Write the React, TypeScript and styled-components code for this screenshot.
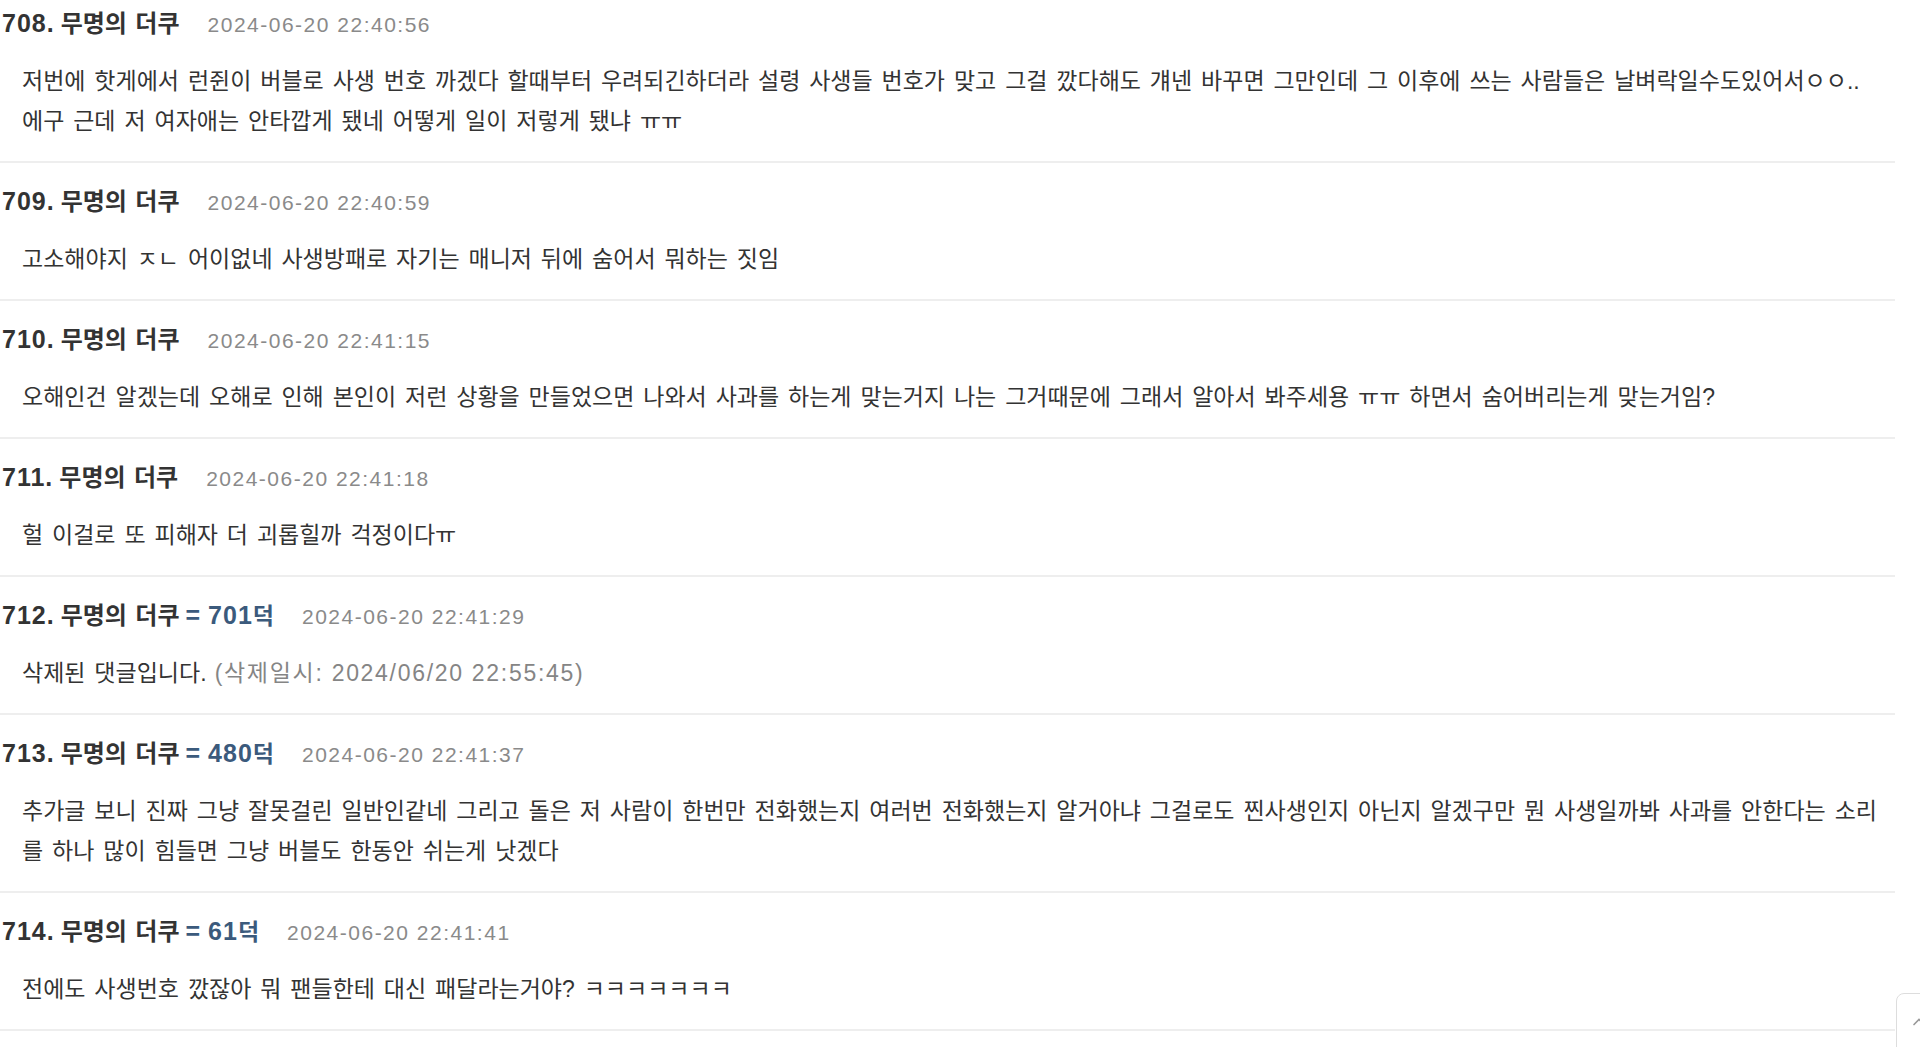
import { FC } from 'react';
import styled, { createGlobalStyle } from 'styled-components';

interface Comment {
  no: number;
  score?: number;
  date: string;
  lines: string[];
  deletedAt?: string;
}

const comments: Comment[] = [
  {
    no: 708,
    date: '2024-06-20 22:40:56',
    lines: [
      '저번에 핫게에서 런쥔이 버블로 사생 번호 까겠다 할때부터 우려되긴하더라 설령 사생들 번호가 맞고 그걸 깠다해도 걔넨 바꾸면 그만인데 그 이후에 쓰는 사람들은 날벼락일수도있어서ㅇㅇ..',
      '에구 근데 저 여자애는 안타깝게 됐네 어떻게 일이 저렇게 됐냐 ㅠㅠ',
    ],
  },
  {
    no: 709,
    date: '2024-06-20 22:40:59',
    lines: ['고소해야지 ㅈㄴ 어이없네 사생방패로 자기는 매니저 뒤에 숨어서 뭐하는 짓임'],
  },
  {
    no: 710,
    date: '2024-06-20 22:41:15',
    lines: [
      '오해인건 알겠는데 오해로 인해 본인이 저런 상황을 만들었으면 나와서 사과를 하는게 맞는거지 나는 그거때문에 그래서 알아서 봐주세용 ㅠㅠ 하면서 숨어버리는게 맞는거임?',
    ],
  },
  {
    no: 711,
    date: '2024-06-20 22:41:18',
    lines: ['헐 이걸로 또 피해자 더 괴롭힐까 걱정이다ㅠ'],
  },
  {
    no: 712,
    score: 701,
    date: '2024-06-20 22:41:29',
    lines: ['삭제된 댓글입니다.'],
    deletedAt: '2024/06/20 22:55:45',
  },
  {
    no: 713,
    score: 480,
    date: '2024-06-20 22:41:37',
    lines: [
      '추가글 보니 진짜 그냥 잘못걸린 일반인같네 그리고 돌은 저 사람이 한번만 전화했는지 여러번 전화했는지 알거아냐 그걸로도 찐사생인지 아닌지 알겠구만 뭔 사생일까봐 사과를 안한다는 소리',
      '를 하나 많이 힘들면 그냥 버블도 한동안 쉬는게 낫겠다',
    ],
  },
  {
    no: 714,
    score: 61,
    date: '2024-06-20 22:41:41',
    lines: ['전에도 사생번호 깠잖아 뭐 팬들한테 대신 패달라는거야? ㅋㅋㅋㅋㅋㅋㅋ'],
  },
];

const App: FC = () => {
  return (
    <>
      <GlobalStyle />
      <CommentList>
        {comments.map((c) => (
          <CommentItem key={c.no}>
            <CommentHead>
              <HeadNum>{c.no}.</HeadNum>
              <Nick>무명의 더쿠</Nick>
              {c.score !== undefined && (
                <Score>
                  <ScoreNum>= {c.score}</ScoreNum>덕
                </Score>
              )}
              <DateText>{c.date}</DateText>
            </CommentHead>
            <CommentBody>
              {c.lines.map((line, i) => (
                <BodyLine key={i}>
                  {line}
                  {c.deletedAt && <Deleted> (삭제일시: {c.deletedAt})</Deleted>}
                </BodyLine>
              ))}
            </CommentBody>
          </CommentItem>
        ))}
        <CommentItem />
      </CommentList>
      <TopButton aria-label="top">
        <Chevron viewBox="0 0 24 24">
          <path d="M6 15l6-6 6 6" />
        </Chevron>
      </TopButton>
    </>
  );
};

export default App;

const GlobalStyle = createGlobalStyle`
  html, body {
    margin: 0;
    padding: 0;
    background: #ffffff;
    overflow: hidden;
  }

  body {
    font-family: "Liberation Sans", "Noto Sans CJK KR", sans-serif;
    color: #333333;
  }
`;

export const CommentList = styled.ul`
  list-style: none;
  margin: -15px 0 0 0;
  padding: 0;
  width: 1895px;
`;

export const CommentItem = styled.li`
  padding: 17px 0 20px 0;
  border-bottom: 2px solid #eeeeee;
`;

export const CommentHead = styled.div`
  display: flex;
  align-items: baseline;
  height: 40px;
  line-height: 40px;
  padding-left: 2px;
  white-space: nowrap;
`;

export const HeadNum = styled.span`
  font-family: "Liberation Sans", sans-serif;
  font-size: 25px;
  font-weight: 700;
  letter-spacing: 1px;
  color: #333333;
  margin-right: 6px;
`;

export const Nick = styled.span`
  font-family: "Noto Sans CJK KR", sans-serif;
  font-size: 24px;
  font-weight: 700;
  word-spacing: 3px;
  color: #333333;
`;

export const Score = styled.span`
  font-family: "Noto Sans CJK KR", sans-serif;
  font-size: 23px;
  font-weight: 700;
  color: #3b5a7c;
  margin-left: 6px;
`;

export const ScoreNum = styled.span`
  font-family: "Liberation Sans", sans-serif;
  font-size: 25px;
  letter-spacing: 1px;
  word-spacing: -1px;
`;

export const DateText = styled.span`
  font-family: "Liberation Sans", sans-serif;
  font-size: 21px;
  letter-spacing: 1.5px;
  color: #8a8a8a;
  margin-left: 28px;
`;

export const CommentBody = styled.div`
  margin-top: 19px;
  padding-left: 22px;
  font-size: 23px;
  line-height: 40px;
  word-spacing: 2.5px;
  color: #333333;
`;

export const BodyLine = styled.div`
  white-space: nowrap;
`;

export const Deleted = styled.span`
  color: #858585;
  letter-spacing: 1.7px;
  word-spacing: 0;
`;

export const TopButton = styled.button`
  position: fixed;
  left: 1896px;
  top: 993px;
  width: 60px;
  height: 80px;
  padding: 0 0 0 12px;
  display: flex;
  align-items: flex-start;
  background: #ffffff;
  border: 1px solid #dddddd;
  border-radius: 8px;
  cursor: pointer;
`;

export const Chevron = styled.svg`
  width: 20px;
  height: 20px;
  margin-top: 18px;
  fill: none;
  stroke: #999999;
  stroke-width: 2;
  stroke-linecap: round;
`;
